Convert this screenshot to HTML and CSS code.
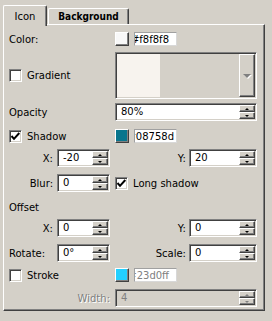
FILE: index.html
```html
<!DOCTYPE html>
<html lang="en">
<head>
    <meta charset="UTF-8">
    <title>Icon settings</title>
    <link rel="stylesheet" href="styles.css">
</head>
<body>
    <div class="dialog">
        <div class="tabs">
            <div class="tab tab-active">Icon</div>
            <div class="tab tab-bg">Background</div>
        </div>
        <div class="panel">
            <div class="row row-sm">
                <div class="cell-left"><span>Color:</span></div>
                <div class="cell-right">
                    <span class="swatch sw-white"></span>
                    <span class="hex"><span>#f8f8f8</span></span>
                </div>
            </div>
            <div class="row row-tall mt-6">
                <div class="cell-left">
                    <span class="check"></span>
                    <span>Gradient</span>
                </div>
                <div class="cell-right">
                    <div class="combo">
                        <span class="combo-preview"></span>
                        <span class="combo-btn"><span class="combo-arrow"></span></span>
                    </div>
                </div>
            </div>
            <div class="row mt-4">
                <div class="cell-left"><span>Opacity</span></div>
                <div class="cell-right">
                    <div class="spin spin-wide">
                        <span class="spin-val">80%</span>
                        <span class="spin-btns"><span class="spin-btn spin-up"></span><span class="spin-btn spin-down"></span></span>
                    </div>
                </div>
            </div>
            <div class="row row-sm mt-8">
                <div class="cell-left">
                    <span class="check">
                        <svg width="13" height="13" viewBox="0 0 13 13"><polyline points="2.5,6 5,8.8 10.3,3" fill="none" stroke="#000" stroke-width="2"/></svg>
                    </span>
                    <span>Shadow</span>
                </div>
                <div class="cell-right">
                    <span class="swatch sw-teal"></span>
                    <span class="hex hex-tight"><span>#08758d</span></span>
                </div>
            </div>
            <div class="row mt-6">
                <div class="cell-left">
                    <span class="lbl lbl-right">X:</span>
                    <div class="spin">
                        <span class="spin-val">-20</span>
                        <span class="spin-btns"><span class="spin-btn spin-up"></span><span class="spin-btn spin-down"></span></span>
                    </div>
                </div>
                <div class="cell-right">
                    <span class="lbl-far">Y:</span>
                    <div class="spin spin-mid">
                        <span class="spin-val">20</span>
                        <span class="spin-btns"><span class="spin-btn spin-up"></span><span class="spin-btn spin-down"></span></span>
                    </div>
                </div>
            </div>
            <div class="row">
                <div class="cell-left">
                    <span class="lbl lbl-right">Blur:</span>
                    <div class="spin">
                        <span class="spin-val">0</span>
                        <span class="spin-btns"><span class="spin-btn spin-up"></span><span class="spin-btn spin-down"></span></span>
                    </div>
                </div>
                <div class="cell-right">
                    <span class="check">
                        <svg width="13" height="13" viewBox="0 0 13 13"><polyline points="2.5,6 5,8.8 10.3,3" fill="none" stroke="#000" stroke-width="2"/></svg>
                    </span>
                    <span class="check-text">Long shadow</span>
                </div>
            </div>
            <div class="row row-title">
                <div class="cell-left"><span>Offset</span></div>
            </div>
            <div class="row mt-3">
                <div class="cell-left">
                    <span class="lbl lbl-right">X:</span>
                    <div class="spin">
                        <span class="spin-val">0</span>
                        <span class="spin-btns"><span class="spin-btn spin-up"></span><span class="spin-btn spin-down"></span></span>
                    </div>
                </div>
                <div class="cell-right">
                    <span class="lbl-far">Y:</span>
                    <div class="spin spin-mid">
                        <span class="spin-val">0</span>
                        <span class="spin-btns"><span class="spin-btn spin-up"></span><span class="spin-btn spin-down"></span></span>
                    </div>
                </div>
            </div>
            <div class="row">
                <div class="cell-left">
                    <span class="lbl">Rotate:</span>
                    <div class="spin">
                        <span class="spin-val">0°</span>
                        <span class="spin-btns"><span class="spin-btn spin-up"></span><span class="spin-btn spin-down"></span></span>
                    </div>
                </div>
                <div class="cell-right">
                    <span class="lbl-far">Scale:</span>
                    <div class="spin spin-mid">
                        <span class="spin-val">0</span>
                        <span class="spin-btns"><span class="spin-btn spin-up"></span><span class="spin-btn spin-down"></span></span>
                    </div>
                </div>
            </div>
            <div class="row row-sm mt-6">
                <div class="cell-left">
                    <span class="check"></span>
                    <span>Stroke</span>
                </div>
                <div class="cell-right">
                    <span class="swatch sw-cyan"></span>
                    <span class="hex disabled-text"><span>#23d0ff</span></span>
                </div>
            </div>
            <div class="row">
                <div class="cell-left cell-end"><span class="disabled-text">Width:</span></div>
                <div class="cell-right">
                    <div class="spin spin-wide spin-disabled">
                        <span class="spin-val">4</span>
                        <span class="spin-btns"><span class="spin-btn spin-up"></span><span class="spin-btn spin-down"></span></span>
                    </div>
                </div>
            </div>
        </div>
    </div>
</body>
</html>
```

FILE: styles.css
```css
body {
    margin: 0;
    background-color: #d4d0c8;
    color: #000;
    font-family: "DejaVu Sans", Tahoma, sans-serif;
    font-size: 10px;
}
.dialog {
    width: 262px;
    padding: 5px 0 0 3px;
}

/* tabs */
.tabs {
    display: flex;
    align-items: flex-end;
    height: 19px;
    position: relative;
    z-index: 1;
}
.tab {
    box-sizing: border-box;
    height: 16px;
    padding-top: 2px;
    line-height: 12px;
    text-align: center;
    background-color: #d4d0c8;
    border-top: 1px solid #fff;
    border-left: 1px solid #fff;
    border-right: 1px solid #404040;
    border-radius: 2px 2px 0 0;
    box-shadow: inset -1px 0 #808080;
}
.tab-active {
    width: 44px;
    height: 21px;
    margin-bottom: -2px;
    padding-top: 5px;
}
.tab-bg {
    width: 81px;
    margin-left: 1px;
    font-family: "DejaVu Sans Condensed", "Liberation Sans", sans-serif;
    font-weight: bold;
}

/* panel */
.panel {
    display: flex;
    flex-direction: column;
    box-sizing: border-box;
    width: 262px;
    padding: 7px 7px 3px 5px;
    border-top: 1px solid #fff;
    border-left: 1px solid #fff;
    border-right: 1px solid #404040;
    border-bottom: 1px solid #404040;
    box-shadow: inset -1px -1px #808080;
}
.row {
    display: flex;
    align-items: center;
    gap: 5px;
    height: 18px;
    margin-top: 7px;
    flex-shrink: 0;
}
.row:first-child {
    margin-top: 0;
}
.row-sm {
    height: 14px;
}
.row-tall {
    height: 47px;
}
.row-title {
    height: 17px;
}
.row.mt-3 { margin-top: 3px; }
.row.mt-4 { margin-top: 4px; }
.row.mt-6 { margin-top: 6px; }
.row.mt-8 { margin-top: 8px; }

.cell-left,
.cell-right {
    display: flex;
    align-items: center;
    height: 100%;
}
.cell-left {
    width: 101px;
    gap: 5px;
}
.cell-right {
    width: 142px;
    gap: 5px;
}
.cell-end {
    justify-content: flex-end;
}
.lbl {
    width: 44px;
    margin-right: -1px;
    white-space: nowrap;
}
.lbl-right {
    text-align: right;
}
.lbl-far {
    width: 71px;
    margin-right: -2px;
    text-align: right;
}

/* colour swatch + hex field */
.swatch {
    box-sizing: border-box;
    width: 14px;
    height: 14px;
    border: 1px solid;
    border-color: #fff #404040 #404040 #fff;
    box-shadow: inset -1px -1px #808080;
}
.sw-white { background-color: #f8f8f8; }
.sw-teal { background-color: #08758d; }
.sw-cyan { background-color: #23d0ff; }
.hex {
    box-sizing: border-box;
    display: flex;
    justify-content: flex-end;
    align-items: center;
    width: 43px;
    height: 14px;
    padding-right: 7px;
    overflow: hidden;
    white-space: nowrap;
    background-color: #fff;
    border: 1px solid;
    border-color: #a0a0a0 #d8d8d8 #d8d8d8 #a0a0a0;
}
.hex-tight {
    padding-right: 2px;
}
.disabled-text {
    color: #808080;
}
.cell-end .disabled-text {
    text-shadow: 1px 1px #fff;
}

/* checkbox */
.check {
    box-sizing: border-box;
    flex-shrink: 0;
    width: 13px;
    height: 13px;
    background-color: #fff;
    border: 1px solid;
    border-color: #808080 #fff #fff #808080;
    box-shadow: inset 1px 1px #404040, inset -1px -1px #d4d0c8;
}
.check svg {
    display: block;
    margin: -1px;
}
.check-text {
    white-space: nowrap;
}

/* spin box */
.spin {
    box-sizing: border-box;
    display: flex;
    width: 53px;
    height: 18px;
    padding: 1px;
    background-color: #fff;
    border: 1px solid;
    border-color: #808080 #fff #fff #808080;
    box-shadow: inset 1px 1px #404040, inset -1px -1px #d4d0c8;
}
.spin-wide {
    width: 142px;
}
.spin-mid {
    width: 68px;
}
.spin-val {
    flex: 1;
    padding-left: 4px;
    line-height: 14px;
}
.spin-btns {
    display: flex;
    flex-direction: column;
    width: 16px;
}
.spin-btn {
    box-sizing: border-box;
    display: flex;
    align-items: center;
    justify-content: center;
    height: 7px;
    background-color: #d4d0c8;
    border: 1px solid;
    border-color: #fff #404040 #404040 #fff;
    box-shadow: inset -1px -1px #808080;
}
.spin-btn::after {
    content: "";
    width: 0;
    height: 0;
    border-left: 2px solid transparent;
    border-right: 2px solid transparent;
}
.spin-up::after {
    border-bottom: 2px solid #000;
}
.spin-down::after {
    border-top: 2px solid #000;
}
.spin-disabled {
    background-color: #d4d0c8;
    color: #808080;
}
.spin-disabled .spin-up::after {
    border-bottom-color: #808080;
}
.spin-disabled .spin-down::after {
    border-top-color: #808080;
}

/* gradient picker */
.combo {
    box-sizing: border-box;
    display: flex;
    width: 142px;
    height: 47px;
    padding: 1px;
    background-color: #d4d0c8;
    border: 1px solid;
    border-color: #808080 #fff #fff #808080;
    box-shadow: inset 1px 1px #404040, inset -1px -1px #d4d0c8;
}
.combo-preview {
    width: 43px;
    background-color: #f7f3ee;
}
.combo-btn {
    box-sizing: border-box;
    display: flex;
    align-items: center;
    justify-content: center;
    width: 16px;
    margin-left: auto;
    background-color: #d4d0c8;
    border: 1px solid;
    border-color: #fff #404040 #404040 #fff;
    box-shadow: inset -1px -1px #808080;
}
.combo-arrow {
    width: 0;
    height: 0;
    border-left: 4px solid transparent;
    border-right: 4px solid transparent;
    border-top: 4px solid #808080;
    filter: drop-shadow(1px 1px 0 #fff);
}
```
